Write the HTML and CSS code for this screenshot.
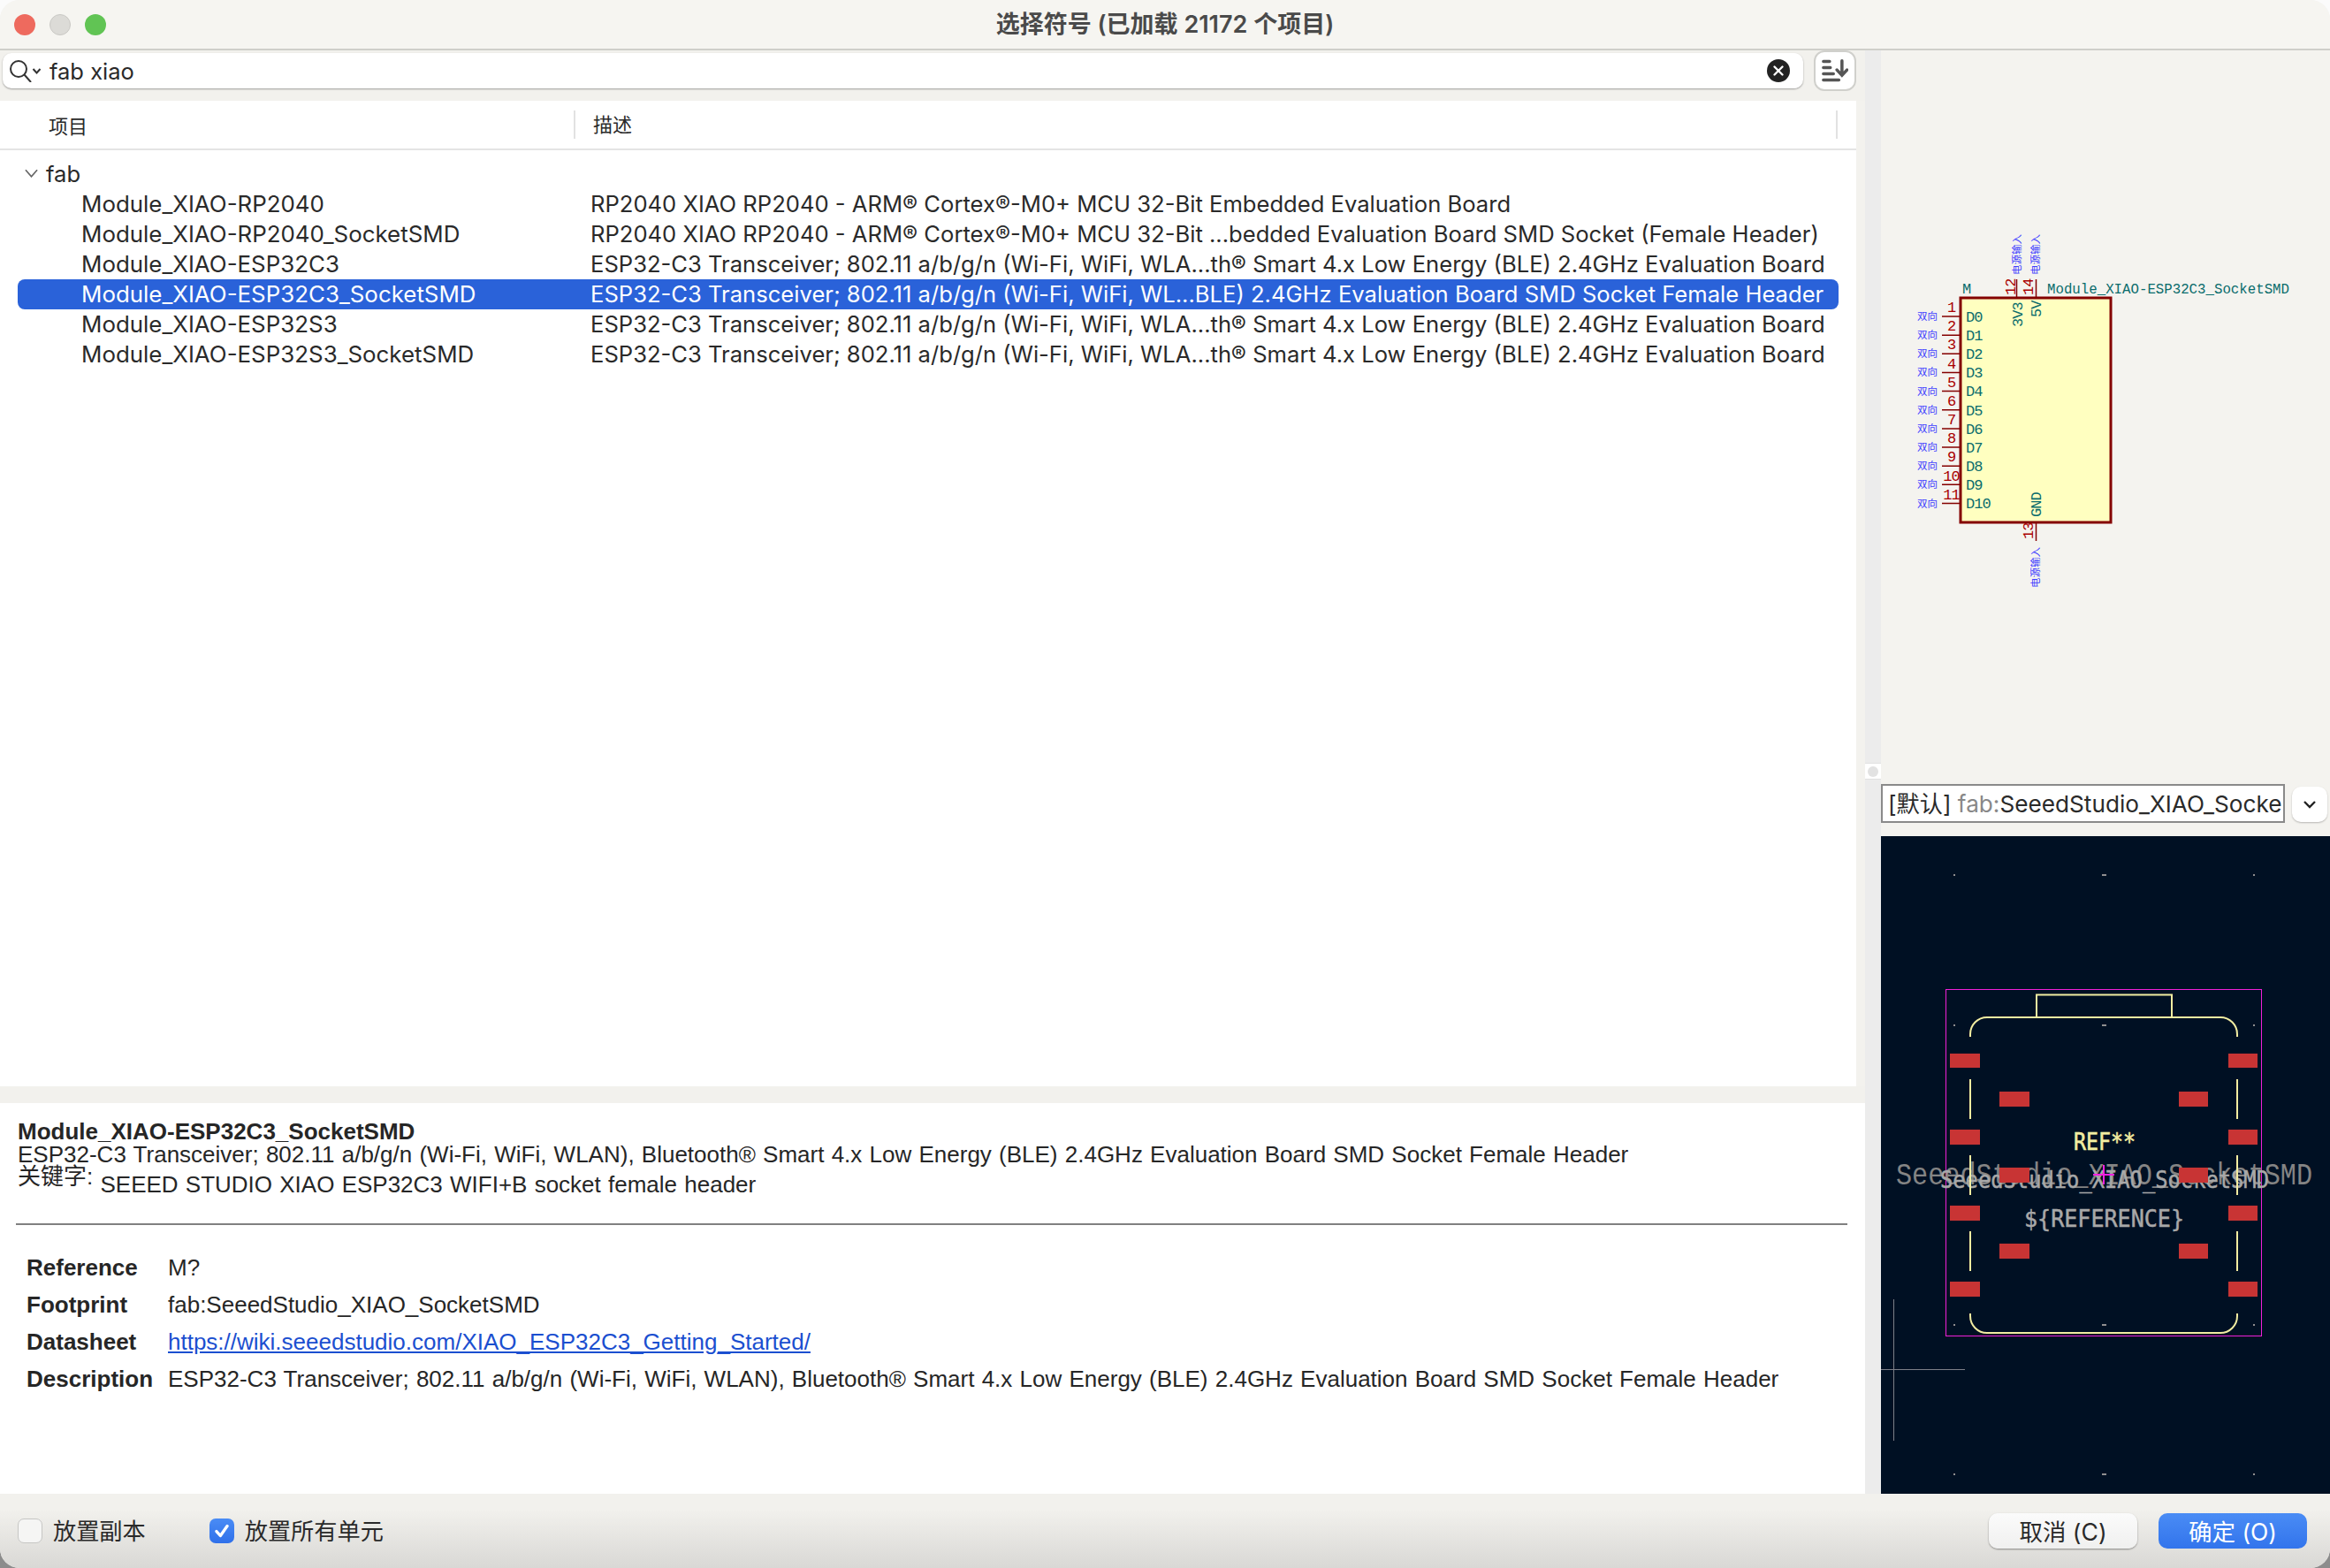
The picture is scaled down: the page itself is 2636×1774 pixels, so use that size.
FILE: index.html
```html
<!DOCTYPE html>
<html lang="zh">
<head>
<meta charset="utf-8">
<title>选择符号</title>
<link rel="stylesheet" href="styles.css">
</head>
<body>
<div class="window">
  <header class="titlebar">
    <div class="lights"><span class="light red"></span><span class="light grey"></span><span class="light green"></span></div>
    <div class="title">选择符号 (已加载 21172 个项目)</div>
  </header>
  <main class="main">
    <section class="left">
      <div class="searchrow">
        <div class="search">
          <svg class="search-icon" viewBox="0 0 36 26"><circle cx="10" cy="11" r="9" class="ic-line"/><path d="M16.500 17.500 L24 26" class="ic-line"/><path d="M26.500 11 L30.500 15.500 L34.500 11" class="ic-line"/></svg>
          <span class="search-text">fab xiao</span>
          <svg class="clear-icon" viewBox="0 0 26 26"><circle cx="13" cy="13" r="13" fill="#222"/><path d="M8.500 8.500 L17.500 17.500 M17.500 8.500 L8.500 17.500" stroke="#fff" stroke-width="2.400" stroke-linecap="round"/></svg>
        </div>
        <button class="sortbtn">
          <svg viewBox="0 0 34 32" class="sort-icon"><path d="M2 4 H10 M2 12 H11 M2 20 H15 M2 28 H22" class="ic-bar"/><path d="M26 3 V21 M19.500 15 L26 22 L32.500 15" class="ic-bar"/></svg>
        </button>
      </div>
      <div class="list">
        <div class="list-head">
          <div class="col-name">项目</div>
          <div class="col-desc">描述</div>
        </div>
        <div class="tree">
          <div class="group"><svg class="caret" viewBox="0 0 16 10"><path d="M1 1 L8 9 L15 1" fill="none" stroke="#666" stroke-width="1.800"/></svg><span>fab</span></div>
          <div class="row"><span>Module_XIAO-RP2040</span><span>RP2040 XIAO RP2040 - ARM® Cortex®-M0+ MCU 32-Bit Embedded Evaluation Board</span></div>
          <div class="row"><span>Module_XIAO-RP2040_SocketSMD</span><span>RP2040 XIAO RP2040 - ARM® Cortex®-M0+ MCU 32-Bit ...bedded Evaluation Board SMD Socket (Female Header)</span></div>
          <div class="row"><span>Module_XIAO-ESP32C3</span><span>ESP32-C3 Transceiver; 802.11 a/b/g/n (Wi-Fi, WiFi, WLA...th® Smart 4.x Low Energy (BLE) 2.4GHz Evaluation Board</span></div>
          <div class="row selected"><span>Module_XIAO-ESP32C3_SocketSMD</span><span>ESP32-C3 Transceiver; 802.11 a/b/g/n (Wi-Fi, WiFi, WL...BLE) 2.4GHz Evaluation Board SMD Socket Female Header</span></div>
          <div class="row"><span>Module_XIAO-ESP32S3</span><span>ESP32-C3 Transceiver; 802.11 a/b/g/n (Wi-Fi, WiFi, WLA...th® Smart 4.x Low Energy (BLE) 2.4GHz Evaluation Board</span></div>
          <div class="row"><span>Module_XIAO-ESP32S3_SocketSMD</span><span>ESP32-C3 Transceiver; 802.11 a/b/g/n (Wi-Fi, WiFi, WLA...th® Smart 4.x Low Energy (BLE) 2.4GHz Evaluation Board</span></div>
        </div>
      </div>
      <div class="hsash"></div>
      <div class="detail">
        <div class="d-name">Module_XIAO-ESP32C3_SocketSMD</div>
        <div class="d-line">ESP32-C3 Transceiver; 802.11 a/b/g/n (Wi-Fi, WiFi, WLAN), Bluetooth® Smart 4.x Low Energy (BLE) 2.4GHz Evaluation Board SMD Socket Female Header</div>
        <div class="d-keys"><span class="d-keylabel">关键字:</span> SEEED STUDIO XIAO ESP32C3 WIFI+B socket female header</div>
        <hr class="d-rule">
        <div class="props">
          <div class="p-label">Reference</div><div class="p-value">M?</div>
          <div class="p-label">Footprint</div><div class="p-value">fab:SeeedStudio_XIAO_SocketSMD</div>
          <div class="p-label">Datasheet</div><div class="p-value"><a class="link" href="#">https://wiki.seeedstudio.com/XIAO_ESP32C3_Getting_Started/</a></div>
          <div class="p-label">Description</div><div class="p-value">ESP32-C3 Transceiver; 802.11 a/b/g/n (Wi-Fi, WiFi, WLAN), Bluetooth® Smart 4.x Low Energy (BLE) 2.4GHz Evaluation Board SMD Socket Female Header</div>
        </div>
      </div>
    </section>
    <div class="vsash">
      <div class="vsash-grip"><span class="grip-dot"></span></div>
    </div>
    <aside class="right">
      <svg class="symbol" viewBox="2128 57 508 806">
        <rect x="2218" y="337" width="170" height="254" class="sym-body"/>
        <g class="sym-pin">
          <path d="M2197 358 H2218 M2197 379.150 H2218 M2197 400.300 H2218 M2197 421.450 H2218 M2197 442.600 H2218 M2197 463.750 H2218 M2197 484.900 H2218 M2197 506 H2218 M2197 527.200 H2218 M2197 548.350 H2218 M2197 569.500 H2218"/>
          <path d="M2281.500 316 V337 M2303.500 316 V337 M2303.500 591 V612"/>
        </g>
        <g class="sym-num">
          <text x="2207.500" y="353">1</text><text x="2207.500" y="374">2</text><text x="2207.500" y="395">3</text><text x="2207.500" y="416.500">4</text><text x="2207.500" y="437.500">5</text><text x="2207.500" y="458.500">6</text><text x="2207.500" y="480">7</text><text x="2207.500" y="501">8</text><text x="2207.500" y="522">9</text><text x="2207.500" y="543.500">10</text><text x="2207.500" y="564.500">11</text>
          <text class="v" transform="translate(2279.500 334) rotate(-90)">12</text>
          <text class="v" transform="translate(2299.500 334) rotate(-90)">14</text>
          <text class="v" transform="translate(2299.500 610) rotate(-90)">13</text>
        </g>
        <g class="sym-pinname">
          <text x="2224" y="363.500">D0</text><text x="2224" y="384.500">D1</text><text x="2224" y="406">D2</text><text x="2224" y="427">D3</text><text x="2224" y="448">D4</text><text x="2224" y="469.500">D5</text><text x="2224" y="490.500">D6</text><text x="2224" y="511.500">D7</text><text x="2224" y="533">D8</text><text x="2224" y="554">D9</text><text x="2224" y="575">D10</text>
          <text transform="translate(2288 370) rotate(-90)">3V3</text>
          <text transform="translate(2308.500 359) rotate(-90)">5V</text>
          <text transform="translate(2308.500 585) rotate(-90)">GND</text>
        </g>
        <text x="2220" y="332" class="sym-field">M</text>
        <text x="2316" y="332" class="sym-field" textLength="274" lengthAdjust="spacingAndGlyphs">Module_XIAO-ESP32C3_SocketSMD</text>
        <g class="sym-type">
          <text x="2169" y="362">双向</text><text x="2169" y="383">双向</text><text x="2169" y="404">双向</text><text x="2169" y="425">双向</text><text x="2169" y="446.500">双向</text><text x="2169" y="468">双向</text><text x="2169" y="489">双向</text><text x="2169" y="510">双向</text><text x="2169" y="531">双向</text><text x="2169" y="552">双向</text><text x="2169" y="573.500">双向</text>
          <text transform="translate(2286 311) rotate(-90)">电源输入</text>
          <text transform="translate(2307 311) rotate(-90)">电源输入</text>
          <text transform="translate(2307 665) rotate(-90)">电源输入</text>
        </g>
      </svg>
      <div class="vgrip"></div>
      <div class="fp-row">
        <div class="fp-combo">[默认] <span class="fp-lib">fab:</span>SeeedStudio_XIAO_Socke</div>
        <button class="fp-drop"><svg viewBox="0 0 16 10" class="fp-chev"><path d="M2 2 L8 8 L14 2" fill="none" stroke="#222" stroke-width="2.400"/></svg></button>
      </div>
      <svg class="pcb" viewBox="2128 946 508 744">
        <g class="grid-dots">
          <rect x="2210" y="989" width="2" height="2"/><rect x="2378" y="989" width="5" height="2"/><rect x="2549" y="989" width="2" height="2"/>
          <rect x="2210" y="1159" width="2" height="2"/><rect x="2378" y="1159" width="5" height="2"/><rect x="2549" y="1159" width="2" height="2"/>
          <rect x="2210" y="1498" width="2" height="2"/><rect x="2378" y="1498" width="5" height="2"/><rect x="2549" y="1498" width="2" height="2"/>
          <rect x="2210" y="1667" width="2" height="2"/><rect x="2378" y="1667" width="5" height="2"/><rect x="2549" y="1667" width="2" height="2"/>
        </g>
        <path d="M2142.500 1470 V1630 M2128 1549.500 H2223" class="axis"/>
        <rect x="2201.500" y="1119.500" width="357" height="392" class="courtyard"/>
        <text x="2145" y="1340" class="pcb-dim" textLength="471" lengthAdjust="spacingAndGlyphs">SeeedStudio_XIAO_SocketSMD</text>
        <text x="2195" y="1344" class="pcb-val" textLength="372" lengthAdjust="spacingAndGlyphs">SeeedStudio_XIAO_SocketSMD</text>
        <text x="2290" y="1387.500" class="pcb-val" textLength="181" lengthAdjust="spacingAndGlyphs">${REFERENCE}</text>
        <text x="2346" y="1301" class="pcb-ref" textLength="70" lengthAdjust="spacingAndGlyphs">REF**</text>
        <g class="pad">
          <rect x="2206" y="1192" width="34" height="16"/><rect x="2206" y="1278" width="34" height="17"/><rect x="2206" y="1364" width="34" height="17"/><rect x="2206" y="1450" width="34" height="17"/>
          <rect x="2521" y="1192" width="33" height="16"/><rect x="2521" y="1278" width="33" height="17"/><rect x="2521" y="1364" width="33" height="17"/><rect x="2521" y="1450" width="33" height="17"/>
          <rect x="2262" y="1235" width="34" height="17"/><rect x="2262" y="1321" width="34" height="17"/><rect x="2262" y="1407" width="34" height="17"/>
          <rect x="2465" y="1235" width="33" height="17"/><rect x="2465" y="1321" width="33" height="17"/><rect x="2465" y="1407" width="33" height="17"/>
        </g>
        <path class="silk" d="M2229 1173 V1170 A19 19 0 0 1 2248 1151 H2512 A19 19 0 0 1 2531 1170 V1173 M2304 1151 V1125.500 H2457 V1151 M2229 1221 V1266 M2229 1307 V1352 M2229 1393 V1438 M2531 1221 V1266 M2531 1307 V1352 M2531 1393 V1438 M2229 1486 V1489 A19 19 0 0 0 2248 1508 H2512 A19 19 0 0 0 2531 1489 V1486"/>
        <path class="anchor" d="M2368 1329 H2392 M2380 1318 V1340"/>
      </svg>
    </aside>
  </main>
  <footer class="bottombar">
    <label class="check"><span class="box"></span><span class="check-text">放置副本</span></label>
    <label class="check second"><span class="box on"><svg viewBox="0 0 20 20" class="tick"><path d="M4.500 10.500 L8.500 15 L15.500 5" fill="none" stroke="#fff" stroke-width="3" stroke-linecap="round" stroke-linejoin="round"/></svg></span><span class="check-text">放置所有单元</span></label>
    <div class="buttons">
      <button class="btn">取消 (C)</button>
      <button class="btn primary">确定 (O)</button>
    </div>
  </footer>
</div>
</body>
</html>
```
FILE: styles.css
```css
* { box-sizing: border-box; }
html, body { margin: 0; height: 100%; overflow: hidden; }
body {
  background: linear-gradient(#fbfbfb 50%, #8c8c8c 50%);
  font-family: Inter, "Noto Sans CJK SC", sans-serif;
  color: #2a2a2a;
}
.window {
  width: 2636px; height: 1774px;
  display: flex; flex-direction: column;
  border-radius: 22px; overflow: hidden;
  background: #f3f2ee;
}
.titlebar {
  height: 57px; flex: none; position: relative;
  background: #f6f5f1; border-bottom: 2px solid #cfcfca;
  display: flex; align-items: center; justify-content: center;
}
.lights { position: absolute; left: 16px; top: 16px; display: flex; gap: 16px; }
.light { width: 24px; height: 24px; border-radius: 50%; }
.red { background: #ee6a5e; }
.grey { background: #dcdbd7; border: 1px solid #c9c8c4; }
.green { background: #61c454; }
.title { font-size: 27px; font-weight: 600; color: #4a4a4a; padding-bottom: 4px; }
.main { flex: 1; display: flex; min-height: 0; }
.left { width: 2110px; flex: none; display: flex; flex-direction: column; }
.searchrow { height: 57px; flex: none; display: flex; padding: 3px 10px 0 3px; gap: 12px; background: #f2f1ed; }
.search {
  width: 2037px; height: 40px; background: #fff; border-radius: 10px;
  box-shadow: 0 1px 2px rgba(0,0,0,.35);
  display: flex; align-items: center; padding: 0 15px 0 8px;
}
.search-icon { width: 36px; height: 26px; flex: none; margin-right: 9px; }
.ic-line { fill: none; stroke: #333; stroke-width: 2; }
.search-text { flex: 1; font-size: 25.500px; padding-top: 1px; }
.clear-icon { width: 26px; height: 26px; }
.sortbtn {
  width: 48px; height: 46px; margin-top: -3px; padding: 7px;
  background: #fff; border: 2px solid #d0d0cc; border-radius: 12px;
}
.sort-icon { display: block; width: 100%; height: 100%; }
.ic-bar { fill: none; stroke: #555; stroke-width: 4; stroke-linecap: round; }
.list { height: 1115px; flex: none; background: #fff; margin-right: 10px; display: flex; flex-direction: column; }
.list-head {
  height: 56px; flex: none; border-bottom: 2px solid #e4e4e4;
  display: grid; grid-template-columns: 649px 1fr; align-items: center;
  font-size: 22px;
}
.col-name { padding-left: 55px; }
.col-desc { height: 32px; border-left: 2px solid #e2e2e2; border-right: 2px solid #e2e2e2; margin-right: 21px; padding-left: 20px; line-height: 32px; }
.tree { padding-top: 10px; font-size: 25.600px; }
.group { height: 34px; padding-bottom: 2px; display: flex; align-items: center; padding-left: 28px; gap: 9px; }
.caret { width: 15px; height: 10px; }
.row {
  height: 34px; padding-bottom: 2px; margin: 0 20px; border-radius: 8px;
  display: grid; grid-template-columns: 648px 1fr; align-items: center;
  white-space: nowrap;
}
.row span:first-child { padding-left: 72px; font-size: 25.900px; }
.selected { background: #2a62d9; color: #fff; }
.hsash { height: 19px; flex: none; background: #f2f1ed; }
.detail {
  flex: 1; background: #fff; padding: 19px 20px 0 20px;
  font-family: "Liberation Sans", "Noto Sans CJK SC", sans-serif;
  font-size: 26px; color: #262626;
}
.d-name { font-weight: 700; line-height: 26px; }
.d-line { line-height: 26px; white-space: nowrap; word-spacing: 1px; }
.d-keys { line-height: 42px; word-spacing: 1px; }
.d-keylabel { position: relative; top: -9px; }
.d-rule { height: 2px; border: 0; background: #808080; margin: 23px 0 0 -2px; }
.props {
  margin: 27px 0 0 10px;
  display: grid; grid-template-columns: 160px 1fr; grid-auto-rows: 42px; align-items: center;
  white-space: nowrap; word-spacing: 1px;
}
.p-label { font-weight: 700; }
.link { color: #1b4fd0; }
.vsash { width: 18px; flex: none; background: #ececec; padding-top: 806px; }
.vsash-grip { height: 19px; background: #fff; border-top: 1px solid #e0e0e0; border-bottom: 1px solid #e0e0e0; display: flex; align-items: center; justify-content: center; }
.grip-dot { width: 12px; height: 12px; border-radius: 50%; background: #e2e2e2; }
.right { flex: 1; display: flex; flex-direction: column; min-width: 0; background: #f4f3ef; }
.symbol { display: block; width: 508px; height: 806px; flex: none; }
.vgrip { height: 24px; flex: none; }
.fp-row { height: 59px; flex: none; display: flex; gap: 8px; }
.fp-combo {
  width: 457px; height: 44px; background: #fff; border: 2.500px solid #8a8a8a;
  font-size: 26.200px; line-height: 42px; padding-left: 6px; white-space: nowrap; overflow: hidden;
}
.fp-lib { color: #888; }
.fp-drop { width: 40px; height: 40px; margin-top: 3px; padding: 0; background: #fff; border: 0; border-radius: 10px; box-shadow: 0 1px 2px rgba(0,0,0,.25); display: flex; align-items: center; justify-content: center; }
.fp-chev { width: 16px; height: 10px; }
.pcb { display: block; width: 508px; height: 744px; flex: none; background: #001023; }
.bottombar {
  height: 84px; flex: none; position: relative;
  background: linear-gradient(#f2f1ed 20%, #d9d8d5);
  display: flex; align-items: center; padding: 0 26px 0 20px;
  font-size: 26.200px; color: #2a2a2a;
}
.check { display: flex; align-items: center; gap: 12px; }
.check-text { padding-bottom: 2px; }
.second { margin-left: 72px; }
.box { width: 28px; height: 28px; border-radius: 7px; background: #f5f5f4; border: 1px solid #c6c6c4; display: flex; align-items: center; justify-content: center; }
.box.on { background: linear-gradient(#4a8cf5, #2f70ea); border: 0; }
.tick { width: 22px; height: 22px; }
.buttons { margin-left: auto; display: flex; gap: 24px; }
.btn {
  width: 168px; height: 40px; padding: 0 0 8px; border: 0; border-radius: 10px;
  background: linear-gradient(#fbfbfb, #f0f0ef); color: #2a2a2a;
  box-shadow: 0 1px 2px rgba(0,0,0,.4);
  font: 26.500px Inter, "Noto Sans CJK SC", sans-serif;
}
.primary { background: linear-gradient(#4a8cf5, #3274ec); color: #fff; box-shadow: none; }
.sym-body { fill: #ffffc0; stroke: #840000; stroke-width: 3; }
.sym-pin { fill: none; stroke: #840000; stroke-width: 1.500; }
.sym-num text { font: 17px "Liberation Mono", monospace; fill: #a90000; text-anchor: middle; letter-spacing: -1px; }
.sym-num text.v { text-anchor: start; }
.sym-pinname text, .sym-field { font: 17px "Liberation Mono", monospace; fill: #0a6c6c; }
.sym-pinname text { letter-spacing: -1px; }
.sym-type text { font: 11.500px "Noto Sans CJK SC", sans-serif; fill: #4040ff; }
.grid-dots { fill: #8f8f8f; }
.axis { fill: none; stroke: #7d8088; stroke-width: 1; }
.courtyard { fill: none; stroke: #f020d8; stroke-width: 1; }
.pad { fill: #c83434; }
.silk { fill: none; stroke: #f2eda1; stroke-width: 2; }
.anchor { fill: none; stroke: #f020e0; stroke-width: 2; }
.pcb-dim { font: 35px "Liberation Mono", monospace; fill: #848484; }
.pcb-val { font: 26px "DejaVu Sans Mono", monospace; fill: #a8a8a8; stroke: #a8a8a8; stroke-width: .5px; }
.pcb-ref { font: 26.500px "DejaVu Sans Mono", monospace; fill: #f2eda1; stroke: #f2eda1; stroke-width: .6px; }
```
